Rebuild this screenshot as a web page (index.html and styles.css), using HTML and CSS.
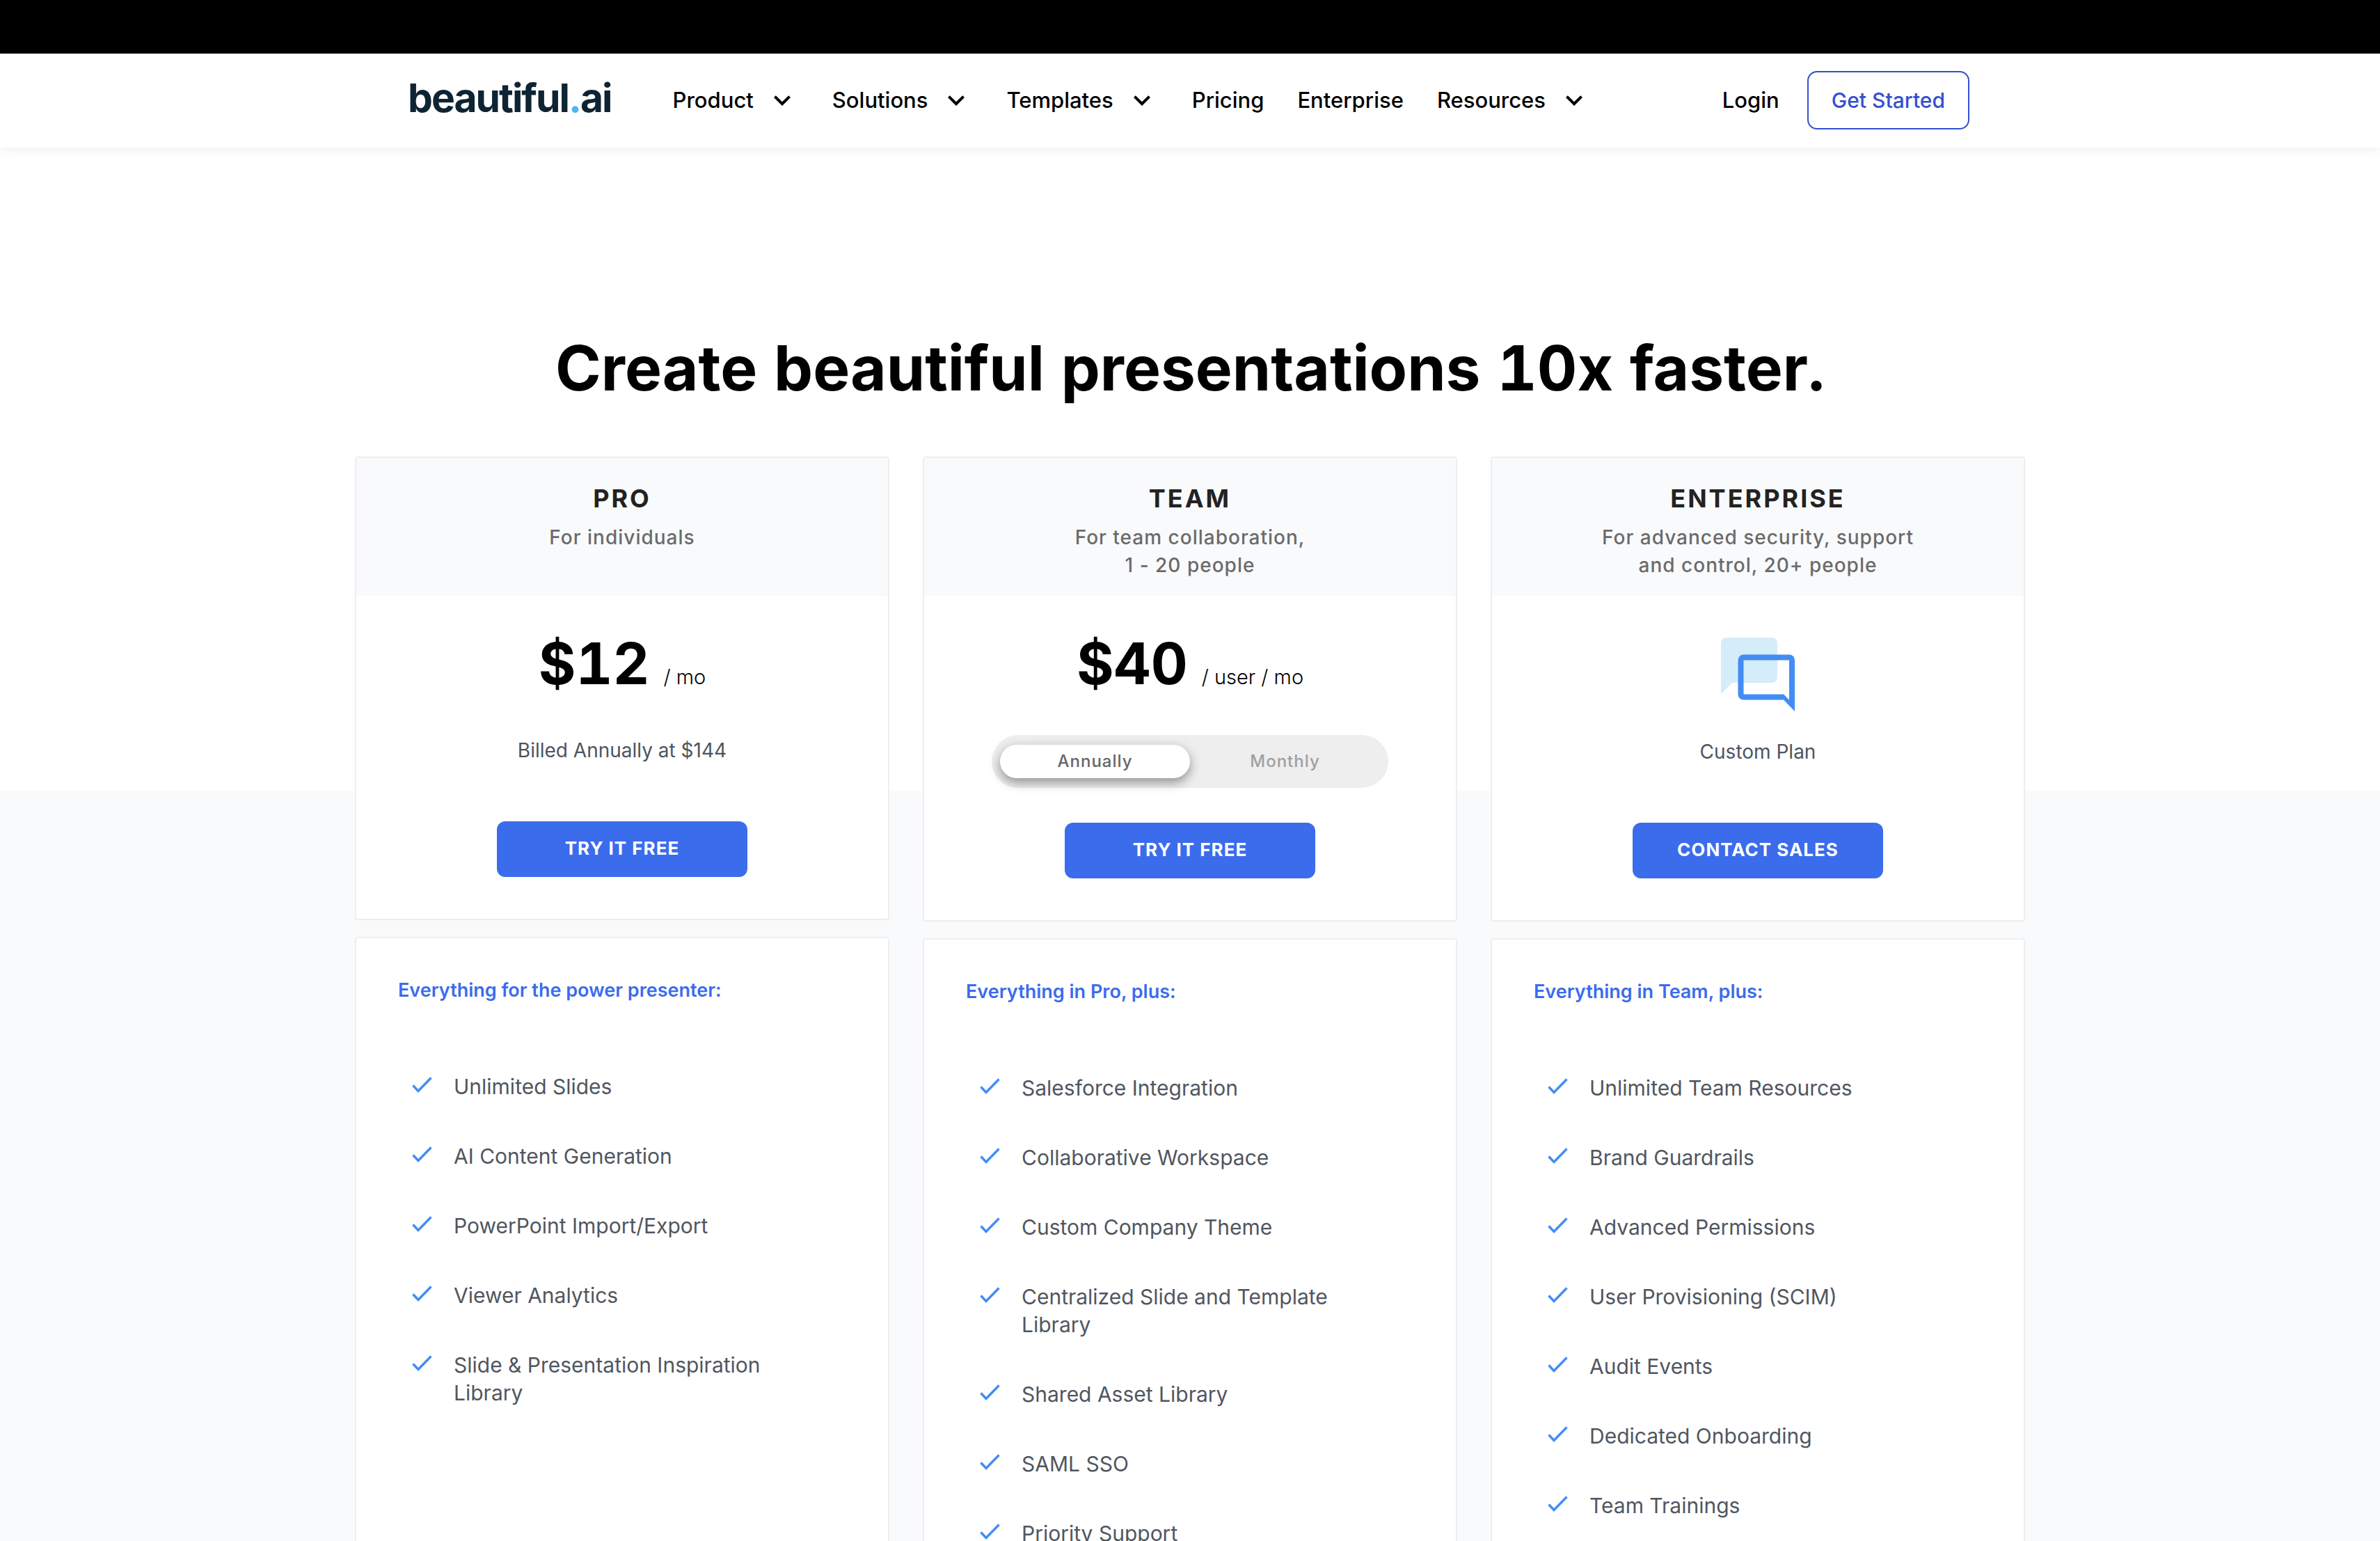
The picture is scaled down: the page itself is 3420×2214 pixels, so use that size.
FILE: index.html
```html
<!DOCTYPE html>
<html lang="en">
<head>
<meta charset="utf-8">
<meta name="viewport" content="width=device-width, initial-scale=1">
<title>Pricing | Beautiful.ai</title>
<link rel="stylesheet" href="styles.css">
</head>
<body>
<svg class="sprite" aria-hidden="true">
  <symbol id="chevron" viewBox="0 0 24 24"><path d="M16.59 8.59 12 13.17 7.41 8.59 6 10l6 6 6-6z"/></symbol>
  <symbol id="check" viewBox="0 0 32 40"><path d="M3.5 18.500 11 26.500 29.5 7.500" fill="none" stroke="#438cf6" stroke-width="3.4"/></symbol>
</svg>

<div class="topbar"></div>
<header class="header">
  <div class="header-inner">
    <a class="logo" href="#">beautiful<span class="logo-dot">.</span>ai</a>
    <nav class="nav">
      <a href="#">Product<svg class="chevron"><use href="#chevron"/></svg></a>
      <a href="#">Solutions<svg class="chevron"><use href="#chevron"/></svg></a>
      <a href="#">Templates<svg class="chevron"><use href="#chevron"/></svg></a>
      <a href="#">Pricing</a>
      <a href="#">Enterprise</a>
      <a href="#">Resources<svg class="chevron"><use href="#chevron"/></svg></a>
    </nav>
    <div class="account">
      <a class="login" href="#">Login</a>
      <a class="get-started" href="#">Get Started</a>
    </div>
  </div>
</header>

<main class="pricing">
  <h1 class="title">Create beautiful presentations 10x faster.</h1>
  <div class="plans">

    <section class="plan">
      <div class="card">
        <div class="card-head">
          <h2 class="plan-name">PRO</h2>
          <p class="plan-for">For individuals</p>
        </div>
        <div class="card-body">
          <p class="price"><span class="amount">$12</span><span class="unit">/ mo</span></p>
          <p class="billing">Billed Annually at $144</p>
          <button class="cta" type="button">TRY IT FREE</button>
        </div>
      </div>
      <div class="card features">
        <h3 class="features-title">Everything for the power presenter:</h3>
        <ul class="feature-list">
          <li><svg class="check"><use href="#check"/></svg>Unlimited Slides</li>
          <li><svg class="check"><use href="#check"/></svg>AI Content Generation</li>
          <li><svg class="check"><use href="#check"/></svg>PowerPoint Import/Export</li>
          <li><svg class="check"><use href="#check"/></svg>Viewer Analytics</li>
          <li><svg class="check"><use href="#check"/></svg>Slide &amp; Presentation Inspiration Library</li>
        </ul>
      </div>
    </section>

    <section class="plan">
      <div class="card">
        <div class="card-head">
          <h2 class="plan-name">TEAM</h2>
          <p class="plan-for">For team collaboration,<br>1 - 20 people</p>
        </div>
        <div class="card-body">
          <p class="price"><span class="amount">$40</span><span class="unit">/ user / mo</span></p>
          <div class="toggle" role="radiogroup" aria-label="Billing period">
            <input type="radio" name="period" id="annually" checked><label for="annually">Annually</label>
            <input type="radio" name="period" id="monthly"><label for="monthly">Monthly</label>
          </div>
          <button class="cta" type="button">TRY IT FREE</button>
        </div>
      </div>
      <div class="card features">
        <h3 class="features-title">Everything in Pro, plus:</h3>
        <ul class="feature-list">
          <li><svg class="check"><use href="#check"/></svg>Salesforce Integration</li>
          <li><svg class="check"><use href="#check"/></svg>Collaborative Workspace</li>
          <li><svg class="check"><use href="#check"/></svg>Custom Company Theme</li>
          <li><svg class="check"><use href="#check"/></svg>Centralized Slide and Template Library</li>
          <li><svg class="check"><use href="#check"/></svg>Shared Asset Library</li>
          <li><svg class="check"><use href="#check"/></svg>SAML SSO</li>
          <li><svg class="check"><use href="#check"/></svg>Priority Support</li>
        </ul>
      </div>
    </section>

    <section class="plan">
      <div class="card">
        <div class="card-head">
          <h2 class="plan-name">ENTERPRISE</h2>
          <p class="plan-for">For advanced security, support<br>and control, 20+ people</p>
        </div>
        <div class="card-body">
          <svg class="chat" viewBox="0 0 106 106" aria-hidden="true">
            <path fill="#d5ecfb" d="M8 0h65a8 8 0 0 1 8 8v49a8 8 0 0 1-8 8H16L0 81V8a8 8 0 0 1 8-8z"/>
            <path fill="#438cf3" fill-rule="evenodd" d="M32.500 24.500H98a8 8 0 0 1 8 8V106L90 89.500H32.500a8 8 0 0 1-8-8v-49a8 8 0 0 1 8-8zM32.500 32.500v49H90l8 8v-57z"/>
          </svg>
          <p class="billing billing-custom">Custom Plan</p>
          <button class="cta" type="button">CONTACT SALES</button>
        </div>
      </div>
      <div class="card features">
        <h3 class="features-title">Everything in Team, plus:</h3>
        <ul class="feature-list">
          <li><svg class="check"><use href="#check"/></svg>Unlimited Team Resources</li>
          <li><svg class="check"><use href="#check"/></svg>Brand Guardrails</li>
          <li><svg class="check"><use href="#check"/></svg>Advanced Permissions</li>
          <li><svg class="check"><use href="#check"/></svg>User Provisioning (SCIM)</li>
          <li><svg class="check"><use href="#check"/></svg>Audit Events</li>
          <li><svg class="check"><use href="#check"/></svg>Dedicated Onboarding</li>
          <li><svg class="check"><use href="#check"/></svg>Team Trainings</li>
        </ul>
      </div>
    </section>

  </div>
</main>
</body>
</html>
```
FILE: styles.css
```css
*,
*::before,
*::after {
  box-sizing: border-box;
}

body {
  margin: 0;
  background: #fff;
  color: #000;
  font-family: Inter, "Liberation Sans", sans-serif;
  font-size: 30px;
  line-height: 40px;
}

h1, h2, h3, p, ul {
  margin: 0;
  padding: 0;
}

a {
  color: inherit;
  text-decoration: none;
}

.sprite {
  display: none;
}

/* Header */
.topbar {
  height: 77px;
  background: #000;
}

.header {
  position: relative;
  padding-bottom: 2px;
  background: #fff;
  box-shadow: 0 4px 16px rgba(0, 0, 0, 0.06);
}

.header-inner {
  display: flex;
  align-items: center;
  max-width: 2248px;
  min-height: 133px;
  margin: 0 auto;
  padding-right: 4px;
  font-size: 31px;
  font-weight: 500;
}

.logo {
  margin-right: 88px;
  padding-bottom: 6px;
  color: #0e2433;
  font-size: 57px;
  font-weight: 700;
  line-height: 64px;
  letter-spacing: -2px;
}

.logo-dot {
  color: #4fb3f6;
}

.nav {
  display: flex;
  align-items: center;
  gap: 48px;
}

.nav a {
  display: flex;
  align-items: center;
}

.chevron {
  width: 48px;
  height: 48px;
  margin-left: 17px;
}

.account {
  display: flex;
  align-items: center;
  gap: 40px;
  margin-left: auto;
}

.get-started {
  padding: 20px 33px;
  border: 2px solid #3450d0;
  border-radius: 14px;
  color: #3450d0;
  font-size: 30px;
}

/* Pricing */
.pricing {
  padding: 263px 40px 0;
  background: linear-gradient(#fff 924px, #f9fafc 924px);
}

.title {
  font-size: 89px;
  font-variant-numeric: tabular-nums;
  font-weight: 700;
  line-height: 108px;
  text-align: center;
}

.plans {
  display: grid;
  grid-template-columns: repeat(3, 1fr);
  gap: 48px;
  max-width: 2400px;
  margin: 73px auto 0;
}

.plan {
  display: flex;
  flex-direction: column;
  gap: 24px;
}

.card {
  border: 2px solid #eee;
  border-radius: 4px;
  background: #fff;
}

.card-head {
  min-height: 198px;
  padding: 38px 24px 24px;
  background: #f9fafc;
  text-align: center;
}

.plan-name {
  margin-bottom: 16px;
  color: #222;
  font-size: 36px;
  font-weight: 700;
  line-height: 40px;
  letter-spacing: 3px;
}

.plan-for {
  color: #6b6b6b;
  font-size: 28px;
  font-weight: 500;
  letter-spacing: 1px;
}

.card-body {
  display: flex;
  flex-direction: column;
  align-items: center;
  padding: 50px 24px 60px;
}

.price {
  display: flex;
  align-items: baseline;
  gap: 20px;
}

.amount {
  font-size: 82px;
  font-variant-numeric: tabular-nums;
  font-weight: 700;
  line-height: 96px;
}

.unit {
  font-size: 29px;
  font-weight: 300;
}

.billing {
  margin: 56px 0 82px;
  color: #4d5560;
  font-size: 28px;
}

.billing-custom {
  margin-top: 38px;
}

.chat {
  width: 106px;
  height: 106px;
  margin-top: 10px;
}

.toggle {
  display: flex;
  width: 570px;
  margin: 54px 0 50px;
  padding: 14px 12px;
  border-radius: 38px;
  background: #eee;
}

.toggle input {
  width: 0;
  height: 0;
  margin: 0;
  appearance: none;
}

.toggle label {
  flex: 1;
  border-radius: 24px;
  color: #a0a0a0;
  font-size: 24px;
  font-weight: 500;
  line-height: 48px;
  letter-spacing: 1px;
  text-align: center;
}

.toggle input:checked + label {
  background: #fff;
  box-shadow: 0 6px 16px rgba(0, 0, 0, 0.4);
  color: #666;
}

.cta {
  width: 360px;
  height: 80px;
  padding: 0 0 3px;
  border: 0;
  border-radius: 12px;
  background: #3b6cec;
  color: #fff;
  font-family: inherit;
  font-size: 26px;
  font-weight: 700;
  letter-spacing: 1px;
}

.features {
  flex: 1;
  padding: 55px 100px 0 60px;
}

.features-title {
  margin-bottom: 98px;
  color: #3b6cec;
  font-size: 27px;
  font-weight: 600;
  line-height: 40px;
}

.feature-list {
  display: flex;
  flex-direction: column;
  gap: 60px;
  padding: 0 0 60px 18px;
  color: #50565f;
  list-style: none;
}

.feature-list li {
  display: flex;
  gap: 30px;
}

.check {
  flex: none;
  width: 32px;
  height: 40px;
}
```
